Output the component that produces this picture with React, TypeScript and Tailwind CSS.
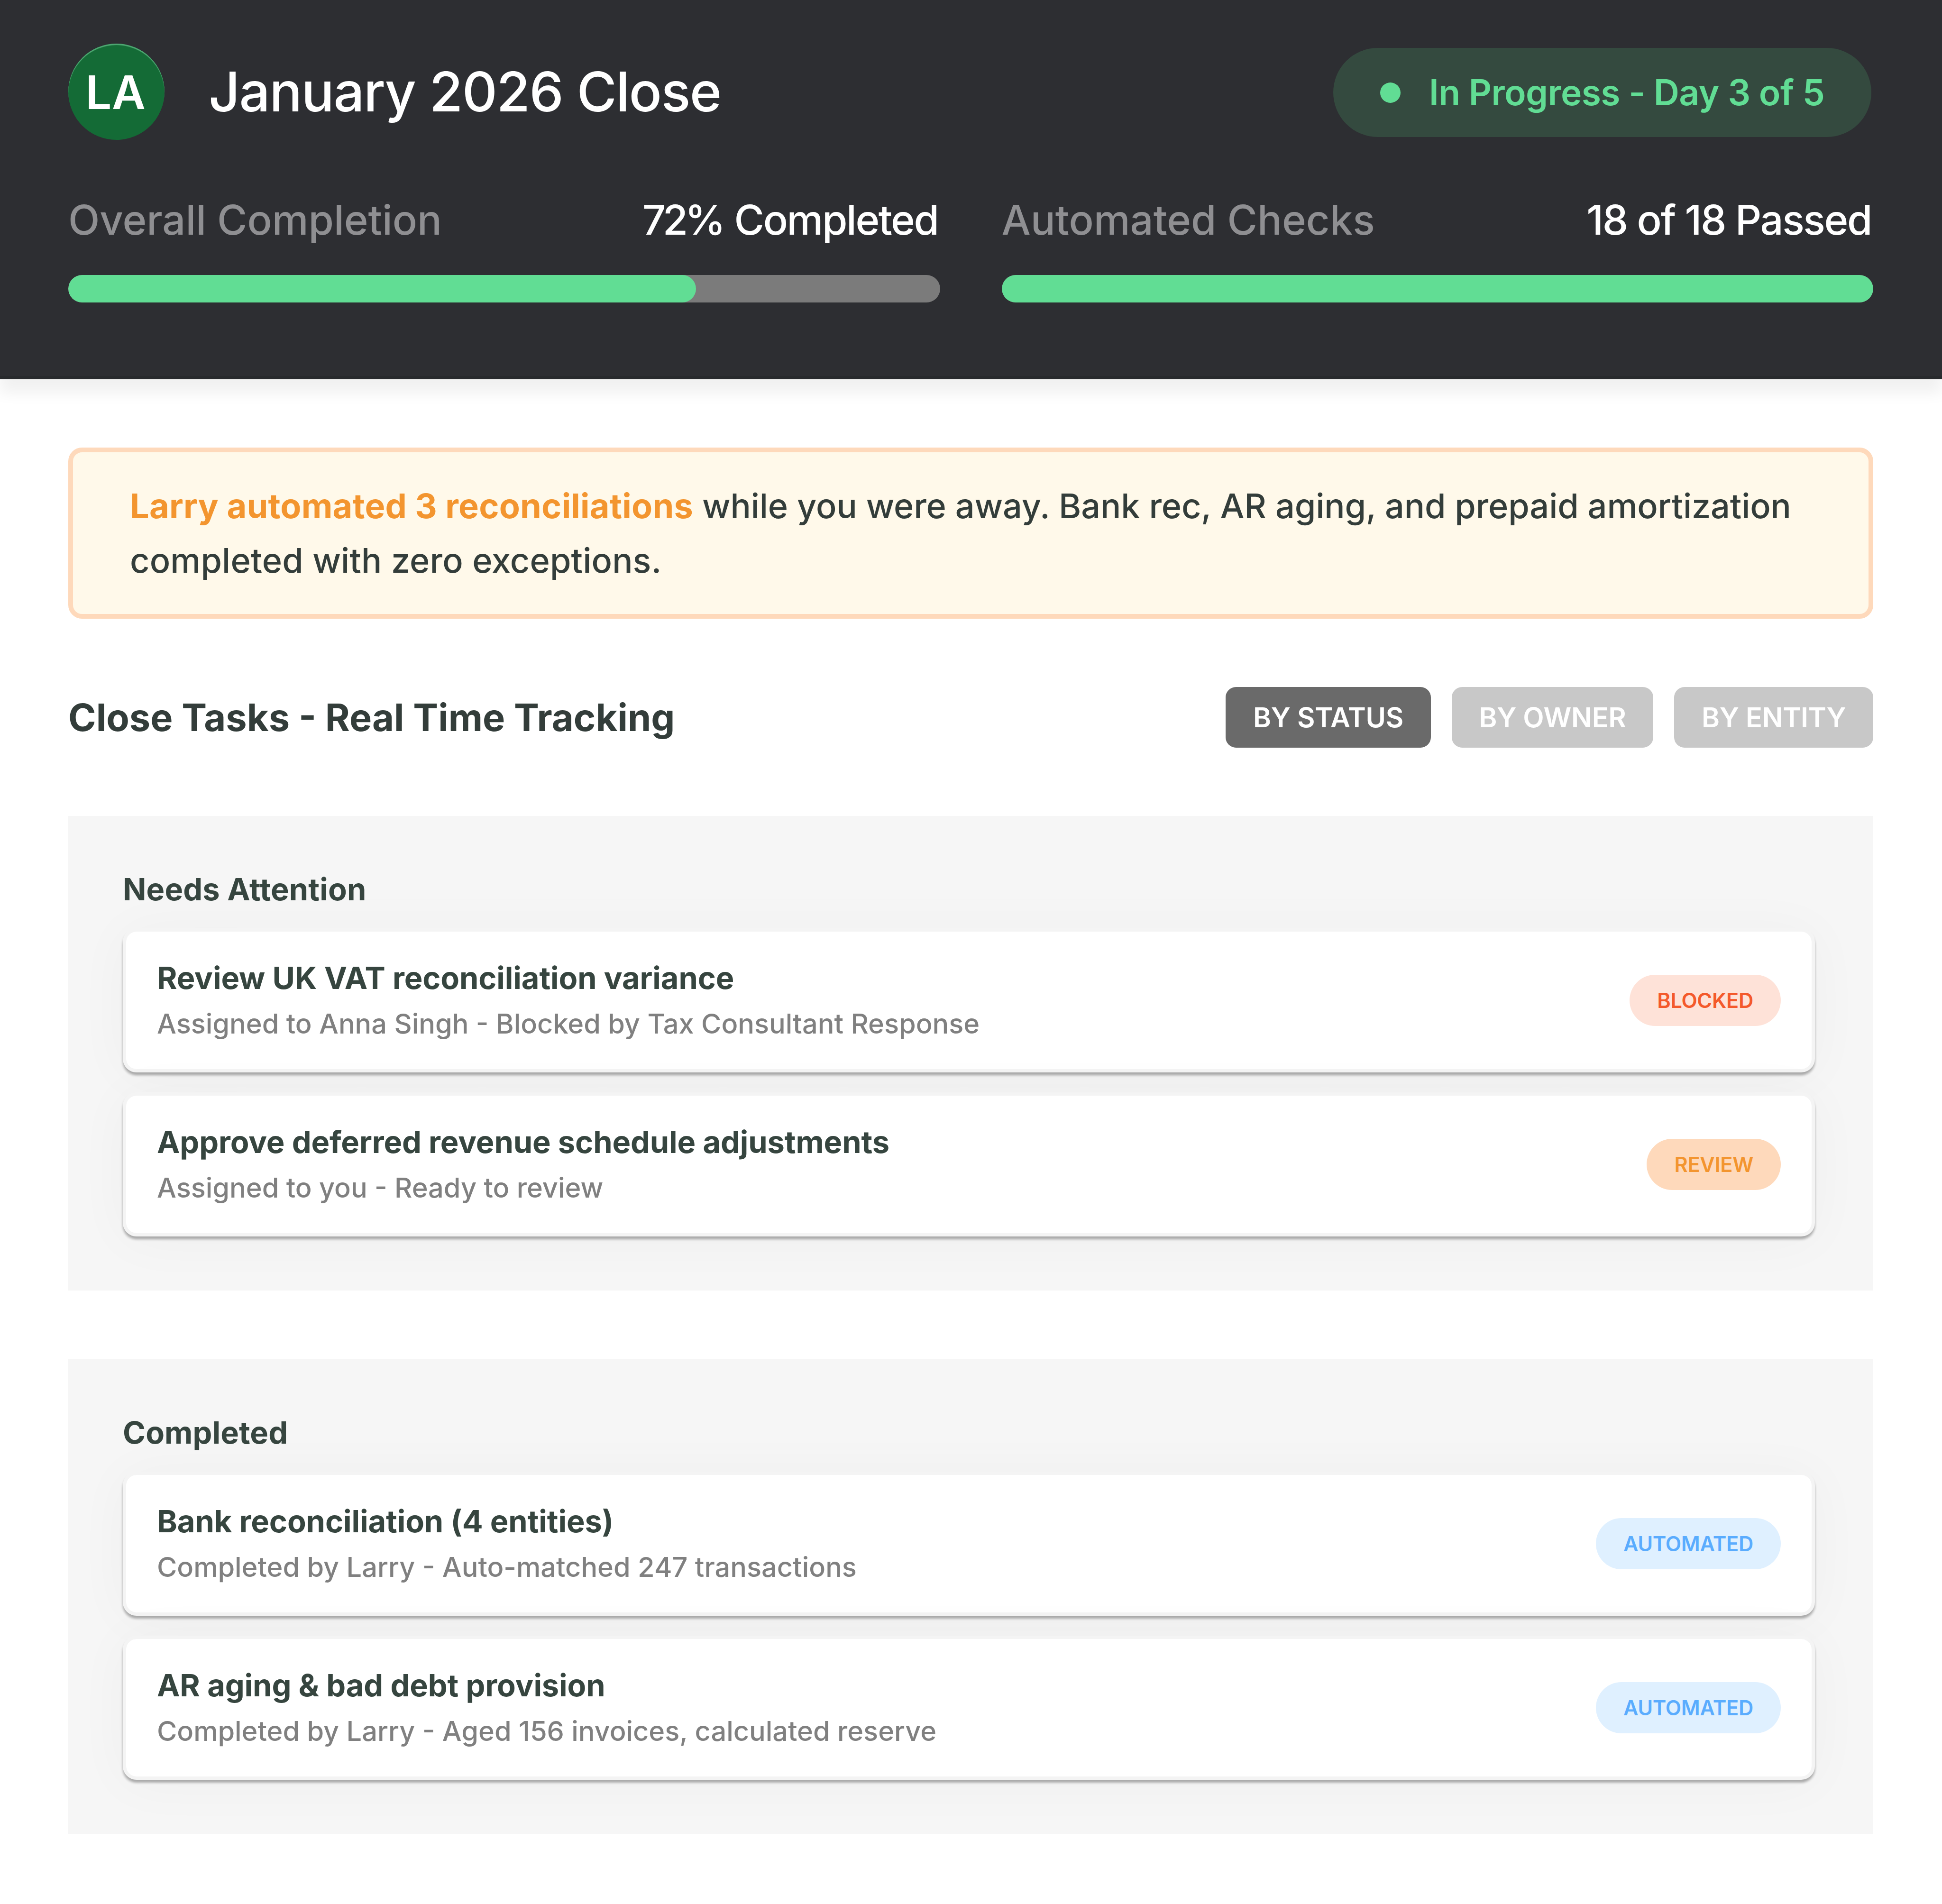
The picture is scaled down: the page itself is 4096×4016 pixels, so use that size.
import type { ReactNode } from "react";

type BadgeKind = "blocked" | "review" | "automated";

interface Task {
  title: string;
  detail: string;
  badge: BadgeKind;
}

const badgeStyles: Record<BadgeKind, string> = {
  blocked: "bg-[#fee2d8] text-[#f4592b]",
  review: "bg-[#fed9bb] text-[#f3952f]",
  automated: "bg-[#dff0ff] text-[#5aacfe]",
};

const attentionTasks: Task[] = [
  {
    title: "Review UK VAT reconciliation variance",
    detail: "Assigned to Anna Singh - Blocked by Tax Consultant Response",
    badge: "blocked",
  },
  {
    title: "Approve deferred revenue schedule adjustments",
    detail: "Assigned to you - Ready to review",
    badge: "review",
  },
];

const completedTasks: Task[] = [
  {
    title: "Bank reconciliation (4 entities)",
    detail: "Completed by Larry - Auto-matched 247 transactions",
    badge: "automated",
  },
  {
    title: "AR aging & bad debt provision",
    detail: "Completed by Larry - Aged 156 invoices, calculated reserve",
    badge: "automated",
  },
];

interface ProgressProps {
  label: string;
  percent: number;
  children: ReactNode;
}

function Progress({ label, percent, children }: ProgressProps) {
  return (
    <div className="flex-1">
      <div className="flex justify-between whitespace-nowrap text-[86.5px] leading-[104px] font-medium">
        <span className="text-[#8f8f92]">{label}</span>
        <span className="pr-[4px] tracking-[-2.4px] text-white">{children}</span>
      </div>
      <div className="mt-[64px] h-[58px] overflow-hidden rounded-full bg-[#7b7b7b]">
        <div className="h-full rounded-full bg-[#61dd94]" style={{ width: `${percent}%` }} />
      </div>
    </div>
  );
}

function TaskCard({ task }: { task: Task }) {
  return (
    <div className="flex h-[304px] items-center justify-between rounded-[29px] border-[7px] border-[#f4f4f4] bg-white bg-clip-padding px-[65px] shadow-[0_6px_5px_rgba(0,0,0,0.3),0_7px_115px_rgba(0,0,0,0.035)]">
      <div className="pt-[2px] whitespace-nowrap">
        <h3 className="text-[64.9px] leading-[96px] font-bold tracking-[-0.1px] text-[#36453f]">{task.title}</h3>
        <p className="text-[57.7px] leading-[96px] font-medium text-[#808080]">{task.detail}</p>
      </div>
      <span
        className={`flex h-[108px] items-center rounded-full px-[58px] text-[43.3px] font-semibold tracking-[-0.3px] uppercase ${badgeStyles[task.badge]}`}
      >
        {task.badge}
      </span>
    </div>
  );
}

function TaskSection({ title, tasks }: { title: string; tasks: Task[] }) {
  return (
    <section className="h-[1001px] overflow-hidden bg-[#f6f6f6] pt-[115px] pr-[123px] pl-[115px]">
      <h2 className="text-[64.9px] leading-[80px] font-bold tracking-[0.15px] text-[#36453f]">{title}</h2>
      <div className="mt-[42px] flex flex-col gap-[42px]">
        {tasks.map((task) => (
          <TaskCard key={task.title} task={task} />
        ))}
      </div>
    </section>
  );
}

export default function App() {
  return (
    <div className="h-[4016px] w-[4096px] overflow-hidden bg-white font-['Inter',sans-serif]">
      {/* Header */}
      <header className="h-[800px] border-b-[7px] border-[#282a2d] bg-[#2d2e32] pt-[92px] pr-[145px] pl-[144px] shadow-[0_29px_29px_rgba(0,0,0,0.06)]">
        <div className="flex h-[203px] items-center">
          <div className="flex size-[203px] shrink-0 items-center justify-center rounded-full bg-[#146b36] pt-[3px] pr-[3px] text-[97.3px] font-semibold tracking-[0.5px] text-white shadow-[inset_0_3px_1px_#4fa873]">
            LA
          </div>
          <h1 className="ml-[93px] pt-[2px] whitespace-nowrap text-[115px] font-medium tracking-[-1.6px] text-white">
            January 2026 Close
          </h1>
          <div className="mt-[3px] mr-[4px] ml-auto flex h-[188px] w-[1135px] items-center rounded-full bg-[#344a3f] pl-[99px]">
            <span className="size-[43px] rounded-full bg-[#61dd94]" />
            <span className="ml-[60px] whitespace-nowrap text-[75px] font-semibold tracking-[-0.6px] text-[#61dd94]">
              In Progress - Day 3 of 5
            </span>
          </div>
        </div>
        <div className="mt-[117px] flex gap-[130px]">
          <Progress label="Overall Completion" percent={72}>
            <span className="tracking-[-6.5px]">72</span>% Completed
          </Progress>
          <Progress label="Automated Checks" percent={100}>
            18 of 18 Passed
          </Progress>
        </div>
      </header>

      <main className="pt-[144px] pr-[145px] pl-[144px]">
        {/* Summary of what ran while away */}
        <div className="h-[361px] rounded-[29px] border-[10px] border-[#fed9bb] bg-[#fff9ea] px-[120px] pt-[55px] text-[72px] leading-[115px] font-medium text-[#333d3a]">
          <p className="tracking-[-0.12px] whitespace-nowrap">
            <strong className="font-bold tracking-[0.2px] text-[#f3952f]">Larry automated 3 reconciliations</strong>{" "}
            while you were away. Bank rec, AR aging, and prepaid amortization
            <br />
            <span className="tracking-[0.15px]">completed with zero exceptions.</span>
          </p>
        </div>

        <div className="mt-[144px] flex h-[128px] items-center justify-between">
          <h2 className="text-[79.3px] font-bold text-[#333d3a]">Close Tasks - Real Time Tracking</h2>
          <div className="flex h-full gap-[44px] text-[57.7px] font-semibold tracking-[-0.25px] text-white">
            <button className="rounded-[22px] bg-[#6a6a6a] px-[57.7px]">BY STATUS</button>
            <button className="rounded-[22px] bg-[#c8c8c8] px-[57.7px]">BY OWNER</button>
            <button className="rounded-[22px] bg-[#c8c8c8] px-[57.7px]">BY ENTITY</button>
          </div>
        </div>

        <div className="mt-[144px] flex flex-col gap-[145px]">
          <TaskSection title="Needs Attention" tasks={attentionTasks} />
          <TaskSection title="Completed" tasks={completedTasks} />
        </div>
      </main>
    </div>
  );
}
